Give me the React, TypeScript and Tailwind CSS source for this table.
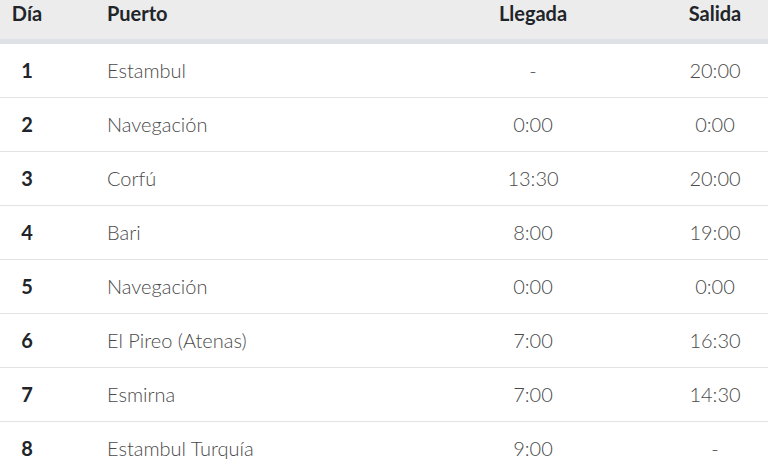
import React from "react";

const rows = [
  { dia: "1", puerto: "Estambul", llegada: "-", salida: "20:00" },
  { dia: "2", puerto: "Navegación", llegada: "0:00", salida: "0:00" },
  { dia: "3", puerto: "Corfú", llegada: "13:30", salida: "20:00" },
  { dia: "4", puerto: "Bari", llegada: "8:00", salida: "19:00" },
  { dia: "5", puerto: "Navegación", llegada: "0:00", salida: "0:00" },
  { dia: "6", puerto: "El Pireo (Atenas)", llegada: "7:00", salida: "16:30" },
  { dia: "7", puerto: "Esmirna", llegada: "7:00", salida: "14:30" },
  { dia: "8", puerto: "Estambul Turquía", llegada: "9:00", salida: "-" },
];

const App: React.FC = () => {
  return (
    <div className="w-[768px] h-[468px] overflow-hidden bg-white font-['Lato',sans-serif] text-[20px] leading-[27px]">
      <table className="w-full table-fixed border-collapse">
        <colgroup>
          <col className="w-[54px]" />
          <col className="w-[350px]" />
          <col className="w-[258px]" />
          <col className="w-[106px]" />
        </colgroup>
        <thead>
          <tr className="bg-[#ececec] border-b-[5px] border-[#dee2e6] text-[#212529]">
            <th className="pt-0 pb-[12px] text-center font-bold">Día</th>
            <th className="pt-0 pb-[12px] pl-[53px] text-left font-bold">Puerto</th>
            <th className="pt-0 pb-[12px] text-center font-bold">Llegada</th>
            <th className="pt-0 pb-[12px] text-center font-bold">Salida</th>
          </tr>
        </thead>
        <tbody>
          {rows.map((r) => (
            <tr key={r.dia} className="border-b border-[#e3e3e3] text-[#4a4a4a] font-light">
              <td className="py-[13px] text-center font-bold text-[#212529]">{r.dia}</td>
              <td className="py-[13px] pl-[53px]">{r.puerto}</td>
              <td className="py-[13px] text-center">{r.llegada}</td>
              <td className="py-[13px] text-center">{r.salida}</td>
            </tr>
          ))}
        </tbody>
      </table>
    </div>
  );
};

export default App;
